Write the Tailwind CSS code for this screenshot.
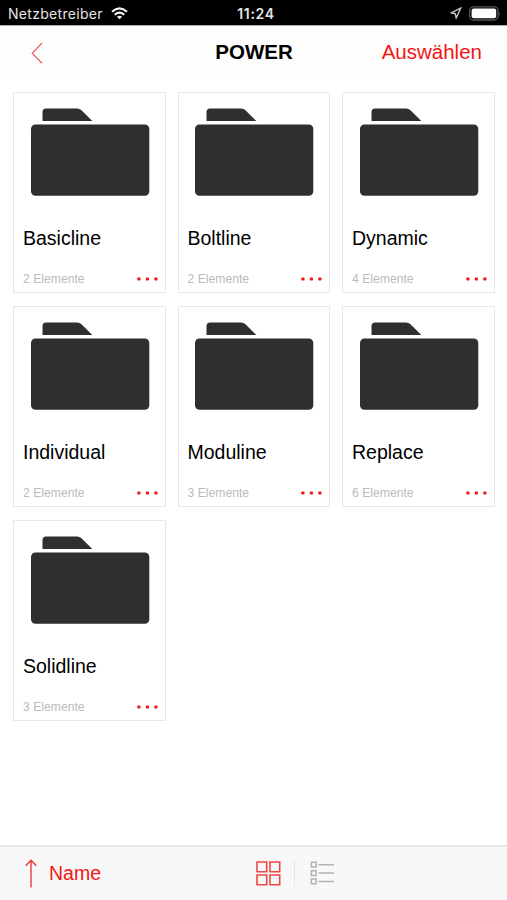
<!DOCTYPE html>
<html lang="de">
<head>
<meta charset="utf-8">
<title>POWER</title>
<script src="https://cdn.jsdelivr.net/npm/@tailwindcss/browser@4"></script>
</head>
<body class="bg-white">
<svg class="hidden">
  <symbol id="folder" viewBox="0 0 120 90">
    <path fill="#2f2f2f" d="M12.5 14V5q0-3.500 3.500-3.500H47q2.500 0 4.200 1.500L62.300 14z"/>
    <rect x="1" y="17.400" width="118.300" height="71.400" rx="4.500" fill="#2f2f2f"/>
  </symbol>
  <symbol id="dots" viewBox="0 0 21 4">
    <g fill="#f01818"><rect x="0.300" y="0.400" width="3.200" height="3.200" rx=".8"/><rect x="8.800" y="0.400" width="3.200" height="3.200" rx=".8"/><rect x="17.300" y="0.400" width="3.200" height="3.200" rx=".8"/></g>
  </symbol>
</svg>
<div class="flex h-[900px] w-[507px] flex-col overflow-hidden font-['Liberation_Sans',Arial,sans-serif]">
  <div class="grid h-[25px] shrink-0 grid-cols-3 items-center bg-black pr-[6px] pl-[8px] pt-[1px] font-[Inter,sans-serif] text-[14px] text-[#e4e4e4]">
    <div class="flex items-center gap-[8px]">
      <span class="text-[14px] tracking-[0.300px]">Netzbetreiber</span>
      <svg class="h-[13px] w-[17px]" viewBox="0 0 17 13" fill="none" stroke="#f4f4f4" stroke-width="2.100"><path d="M1 4.700q7.500-6.600 15 0M3.700 7.700q4.800-4.200 9.600 0"/><path d="M8.500 12.300 5.900 9.800q2.600-2.100 5.200 0z" fill="#f4f4f4" stroke="none"/></svg>
    </div>
    <span class="pl-[3px] text-center text-[14px] font-semibold tracking-[0.650px]">11:24</span>
    <div class="flex items-center justify-end gap-[7px]">
      <svg class="h-[12px] w-[12px]" viewBox="0 0 12 12" fill="none" stroke="#c8c8c8" stroke-width="1.400"><path d="M10.600 1.200 1.200 5.900l4.100 1 .9 4.100z"/></svg>
      <svg class="h-[15px] w-[32px]" viewBox="0 0 32 15"><rect x=".7" y=".8" width="28.300" height="13.200" rx="3.800" fill="none" stroke="#55565a" stroke-width="1.300"/><rect x="2.600" y="2.600" width="24.600" height="9.600" rx="2" fill="#fff"/><path d="M30.300 5.400q1.400 2 0 4z" fill="#666"/></svg>
    </div>
  </div>
  <header class="grid h-[55px] shrink-0 grid-cols-3 items-center border-t border-[#aaa] bg-[#fdfdfd] pr-[25px] pb-[1px] pl-[31px]">
    <svg class="h-[22px] w-[12px]" viewBox="0 0 12 22" fill="none" stroke="#f2666b" stroke-width="1.300"><path d="M11 1 1.200 11.200 11 21.200"/></svg>
    <h1 class="pr-[5px] text-center text-[20.500px] font-bold text-black">POWER</h1>
    <button class="text-right text-[20.500px] text-[#f51414]">Auswählen</button>
  </header>
  <main class="grid flex-1 auto-rows-[201px] grid-cols-[repeat(3,152.500px)] content-start gap-x-[12px] gap-y-[12.800px] pt-[12px] pl-[13px] text-black">
    <article class="flex flex-col border border-[#e8e8e8] pr-[8.500px] pl-[9px]">
      <svg class="mt-[14px] ml-[7px] h-[90px] w-[120px]"><use href="#folder"/></svg>
      <h2 class="mt-[29px] text-[19.500px] leading-[24px]">Basicline</h2>
      <div class="mt-[21px] flex items-center justify-between text-[12.200px] leading-[16px] text-[#bbb]"><span>2 Elemente</span><svg class="-mr-[1.500px] h-[4px] w-[21px]"><use href="#dots"/></svg></div>
    </article>
    <article class="flex flex-col border border-[#e8e8e8] pr-[8.500px] pl-[9px]">
      <svg class="mt-[14px] ml-[6.500px] h-[90px] w-[120px]"><use href="#folder"/></svg>
      <h2 class="mt-[29px] text-[19.500px] leading-[24px]">Boltline</h2>
      <div class="mt-[21px] flex items-center justify-between text-[12.200px] leading-[16px] text-[#bbb]"><span>2 Elemente</span><svg class="-mr-[1.500px] h-[4px] w-[21px]"><use href="#dots"/></svg></div>
    </article>
    <article class="flex flex-col border border-[#e8e8e8] pr-[8.500px] pl-[9px]">
      <svg class="mt-[14px] ml-[7px] h-[90px] w-[120px]"><use href="#folder"/></svg>
      <h2 class="mt-[29px] text-[19.500px] leading-[24px]">Dynamic</h2>
      <div class="mt-[21px] flex items-center justify-between text-[12.200px] leading-[16px] text-[#bbb]"><span>4 Elemente</span><svg class="-mr-[1.500px] h-[4px] w-[21px]"><use href="#dots"/></svg></div>
    </article>
    <article class="flex flex-col border border-[#e8e8e8] pr-[8.500px] pl-[9px]">
      <svg class="mt-[14px] ml-[7px] h-[90px] w-[120px]"><use href="#folder"/></svg>
      <h2 class="mt-[29px] text-[19.500px] leading-[24px]">Individual</h2>
      <div class="mt-[21px] flex items-center justify-between text-[12.200px] leading-[16px] text-[#bbb]"><span>2 Elemente</span><svg class="-mr-[1.500px] h-[4px] w-[21px]"><use href="#dots"/></svg></div>
    </article>
    <article class="flex flex-col border border-[#e8e8e8] pr-[8.500px] pl-[9px]">
      <svg class="mt-[14px] ml-[6.500px] h-[90px] w-[120px]"><use href="#folder"/></svg>
      <h2 class="mt-[29px] text-[19.500px] leading-[24px]">Moduline</h2>
      <div class="mt-[21px] flex items-center justify-between text-[12.200px] leading-[16px] text-[#bbb]"><span>3 Elemente</span><svg class="-mr-[1.500px] h-[4px] w-[21px]"><use href="#dots"/></svg></div>
    </article>
    <article class="flex flex-col border border-[#e8e8e8] pr-[8.500px] pl-[9px]">
      <svg class="mt-[14px] ml-[7px] h-[90px] w-[120px]"><use href="#folder"/></svg>
      <h2 class="mt-[29px] text-[19.500px] leading-[24px]">Replace</h2>
      <div class="mt-[21px] flex items-center justify-between text-[12.200px] leading-[16px] text-[#bbb]"><span>6 Elemente</span><svg class="-mr-[1.500px] h-[4px] w-[21px]"><use href="#dots"/></svg></div>
    </article>
    <article class="flex flex-col border border-[#e8e8e8] pr-[8.500px] pl-[9px]">
      <svg class="mt-[14px] ml-[7px] h-[90px] w-[120px]"><use href="#folder"/></svg>
      <h2 class="mt-[29px] text-[19.500px] leading-[24px]">Solidline</h2>
      <div class="mt-[21px] flex items-center justify-between text-[12.200px] leading-[16px] text-[#bbb]"><span>3 Elemente</span><svg class="-mr-[1.500px] h-[4px] w-[21px]"><use href="#dots"/></svg></div>
    </article>
  </main>
  <footer class="flex h-[55px] shrink-0 items-center border-t-2 border-[#e9e9e9] bg-[#f8f8f8] pl-[25px]">
    <div class="flex w-[230px] items-center gap-[12px]">
      <svg class="-mt-px h-[29px] w-[12px]" viewBox="0 0 12 29" fill="none" stroke="#ee3a3a" stroke-width="1.400"><path d="M6 1.200V28.500M.7 6.800 6 1.200l5.300 5.600"/></svg>
      <span class="text-[19.500px] text-[#f51414]">Name</span>
    </div>
    <svg class="-mt-px ml-[1px] h-[25px] w-[25px]" viewBox="0 0 25 25" fill="none" stroke="#ee4646" stroke-width="1.600"><path d="M1 1h9.700v9.700H1zM14 1h9.700v9.700H14zM1 14h9.700v9.700H1zM14 14h9.700v9.700H14z"/></svg>
    <div class="-mt-px ml-[13px] h-[25px] w-px bg-[#e6e6e6]"></div>
    <svg class="-mt-px ml-[15px] h-[24px] w-[25px]" viewBox="0 0 25 24" fill="none" stroke="#b2b2b2" stroke-width="1.500"><path d="M1.400 1.300h4.700v4.700H1.400zM1.400 9.700h4.700v4.700H1.400zM1.400 18.100h4.700v4.700H1.400zM8.500 3.700H24M8.500 12.100H24M8.500 20.500H24"/></svg>
  </footer>
</div>
</body>
</html>
